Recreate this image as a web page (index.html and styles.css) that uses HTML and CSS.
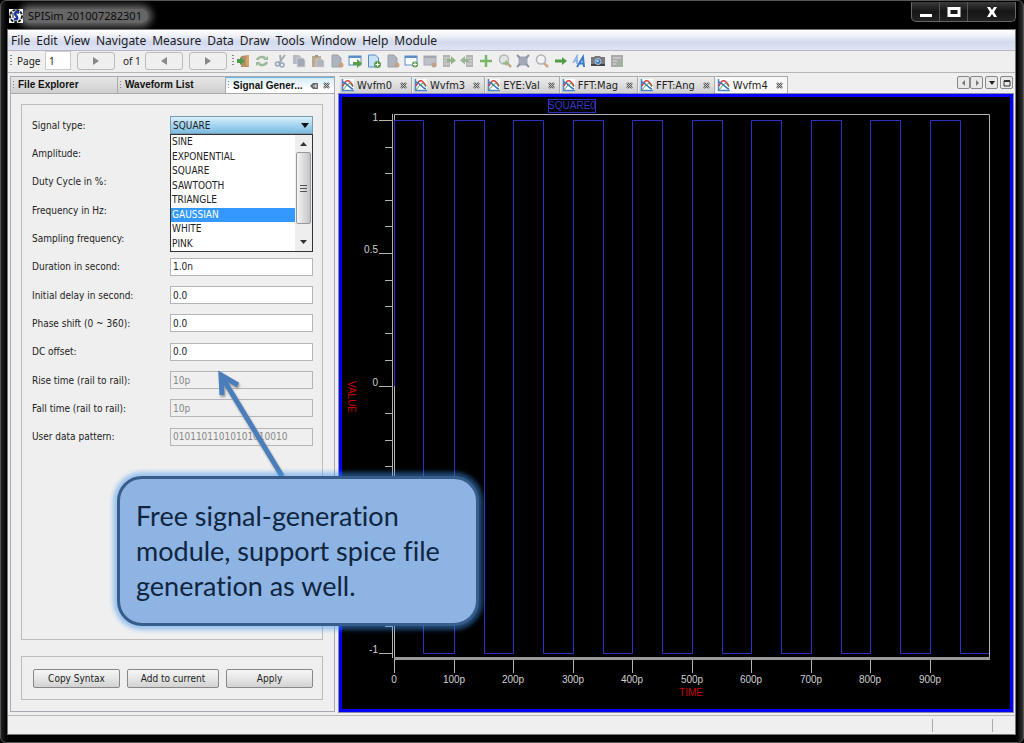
FILE: index.html
```html
<!DOCTYPE html>
<html lang="en">
<head>
<meta charset="utf-8">
<title>SPISim 201007282301</title>
<link rel="stylesheet" href="styles.css">
</head>
<body>
<svg class="defs" aria-hidden="true">
  <symbol id="wave" viewBox="0 0 13 13"><rect x="1" y="0" width="12" height="12" fill="#fff"/><path d="M1.500 0v11.500H13" stroke="#4b86c8" stroke-width="1.500" fill="none"/><path d="M2 7C5 0 8 0 12 7" stroke="#d94141" stroke-width="1.700" fill="none"/><path d="M2 3c4 1 6 6 10 7" stroke="#3b78c4" stroke-width="1.700" fill="none"/><path d="M2 11 6 6l3-2 3 4" stroke="#4f9f58" stroke-width="1" fill="none"/></symbol>
  <symbol id="close" viewBox="0 0 7 7"><path d="M1 1l5 5M6 1 1 6" stroke="#555" stroke-width="2.400"/><path d="M1 1l5 5M6 1 1 6" stroke="#eee" stroke-width=".7"/></symbol>
  <symbol id="doc" viewBox="0 0 14 14"><path d="M2 1h6l3 3v9H2z" fill="#aeb4be" stroke="#9ba1ab"/></symbol>
</svg>
<div class="window">
  <header class="titlebar">
    <svg class="app-icon" viewBox="0 0 14 14"><rect width="14" height="14" fill="#fff"/><circle cx="7" cy="7" r="6" fill="none" stroke="#222" stroke-width="2" stroke-dasharray="3 1"/><path d="M10 4C7 2 5 4 7 6.500S9 11 5 10" stroke="#1837a4" stroke-width="2.500" fill="none"/><path d="M4 4v5" stroke="#111"/></svg>
    <h1>SPISim 201007282301</h1>
    <div class="win-buttons">
      <button aria-label="Minimize"><svg viewBox="0 0 14 12"><path d="M1 9.500h12" stroke="#fff" stroke-width="3"/></svg></button>
      <button aria-label="Maximize"><svg viewBox="0 0 14 12"><rect x="2" y="2.500" width="10" height="7" fill="none" stroke="#fff" stroke-width="3"/></svg></button>
      <button aria-label="Close" class="wide"><svg viewBox="0 0 14 12"><path d="M2 1h3l2 3 2-3h3L9 6l3 5H9L7 8l-2 3H2l3-5z" fill="#fff"/></svg></button>
    </div>
  </header>
  <div class="client">
    <nav class="menu">
      <a href="#">File</a><a href="#">Edit</a><a href="#">View</a><a href="#">Navigate</a><a href="#">Measure</a><a href="#">Data</a><a href="#">Draw</a><a href="#">Tools</a><a href="#">Window</a><a href="#">Help</a><a href="#">Module</a>
    </nav>
    <div class="toolbar">
      <i class="grip"></i>
      <label for="page">Page</label><input id="page" value="1">
      <button class="pager" aria-label="Go"><svg viewBox="0 0 6 8"><path d="M0 0l6 4-6 4z"/></svg></button>
      <span class="of">of 1</span>
      <button class="pager" aria-label="Previous"><svg viewBox="0 0 6 8"><path d="M6 0 0 4l6 4z"/></svg></button>
      <button class="pager" aria-label="Next"><svg viewBox="0 0 6 8"><path d="M0 0l6 4-6 4z"/></svg></button>
      <i class="grip"></i>
      <div class="tools">
        <button aria-label="Exit"><svg viewBox="0 0 14 14"><path d="M5 2l8-1v12H5z" fill="#b58f68"/><path d="M10 3l3-2v12l-3-2z" fill="#d9a46a"/><path d="M1 5h3V3l5 4-5 4V9H1z" fill="#4e9a4a"/></svg></button>
        <button aria-label="Refresh"><svg viewBox="0 0 14 14"><path d="M2 6c1-3 6-4 8-2M12 8c-1 3-6 4-8 2" stroke="#9ab89a" stroke-width="2.500" fill="none"/><path d="M8 6h5V2zM6 8H1v4z" fill="#9ab89a"/></svg></button>
        <button aria-label="Cut"><svg viewBox="0 0 14 14"><path d="M5 9 11 1M7 8 6 1" stroke="#a5a9b0" stroke-width="2"/><circle cx="3.500" cy="10" r="2" fill="none" stroke="#94a5bd" stroke-width="1.500"/><circle cx="8" cy="11" r="2" fill="none" stroke="#94a5bd" stroke-width="1.500"/></svg></button>
        <button aria-label="Copy"><svg viewBox="0 0 14 14"><path d="M1 1h6l2 2v7H1z" fill="#b5bac3"/><path d="M5 4h6l2 2v7H5z" fill="#a3a9b4" stroke="#d6dade" stroke-width=".7"/></svg></button>
        <button aria-label="Paste"><svg viewBox="0 0 14 14"><path d="M1 2h9v11H1z" fill="#bda98f"/><path d="M4 1h3v2H4z" fill="#999"/><path d="M5 5h6l2 2v6H5z" fill="#b1b4ba" stroke="#d6d6d6" stroke-width=".7"/></svg></button>
        <button aria-label="Remove file"><svg viewBox="0 0 14 14"><use href="#doc"/><circle cx="11" cy="11" r="2.500" fill="#c5a184"/></svg></button>
        <button aria-label="Export window"><svg viewBox="0 0 14 14"><rect x="1" y="2" width="12" height="9" fill="#f7faff" stroke="#5c8ec4"/><path d="M1 3h12" stroke="#5c8ec4" stroke-width="2"/><path d="M5 8h4V5l5 4.500L9 14v-3H5z" fill="#5a9f42"/></svg></button>
        <button aria-label="New file"><svg viewBox="0 0 14 14"><path d="M1.500 1h7l3 3v9h-10z" fill="#c8e0f8" stroke="#548bc4"/><circle cx="10.500" cy="10.500" r="3.500" fill="#5d9e4c"/><path d="M8.500 10.500h4m-2-2v4" stroke="#fff"/></svg></button>
        <button aria-label="Delete file"><svg viewBox="0 0 14 14"><use href="#doc"/><circle cx="11" cy="11" r="2.500" fill="#c5a184"/></svg></button>
        <button aria-label="New window"><svg viewBox="0 0 14 14"><rect x="1" y="2" width="12" height="9" fill="#f7faff" stroke="#5c8ec4"/><path d="M1 3h12" stroke="#5c8ec4" stroke-width="2"/><circle cx="11" cy="10.500" r="3" fill="#5d9e4c"/><path d="M9 10.500h4m-2-2v4" stroke="#fff"/></svg></button>
        <button aria-label="Close window"><svg viewBox="0 0 14 14"><rect x="1" y="2" width="12" height="9" fill="#bec1c7" stroke="#a6abb3"/><path d="M1 3h12" stroke="#a0a5ae" stroke-width="2"/><circle cx="11" cy="11" r="2.500" fill="#c5a184"/></svg></button>
        <button aria-label="Import data"><svg viewBox="0 0 14 14"><path d="M1 1h7v12H1z" fill="#b4b4b4"/><path d="M2 4h5M2 7h5M2 10h5" stroke="#d8d8d8"/><path d="M5 5h4V2l5 4.500-5 4V8H5z" fill="#93b48b"/></svg></button>
        <button aria-label="Export data"><svg viewBox="0 0 14 14"><path d="M6 1h7v12H6z" fill="#b4b4b4"/><path d="M7 4h5M7 7h5M7 10h5" stroke="#d8d8d8"/><path d="M9 5H5V2L0 6.500l5 4V8h4z" fill="#9cb497"/></svg></button>
        <button aria-label="Crosshair"><svg viewBox="0 0 14 14"><path d="M7 1v12M1 7h12" stroke="#7bb56c" stroke-width="2.500"/></svg></button>
        <button aria-label="Zoom in"><svg viewBox="0 0 14 14"><path d="M9 9l4 4" stroke="#c9a986" stroke-width="2.500"/><circle cx="6" cy="5.500" r="4.500" fill="#e4e4e4" stroke="#b4b8bc" stroke-width="1.500"/><path d="M5 9h6M8 6.500v5" stroke="#8fb783" stroke-width="1.500"/></svg></button>
        <button aria-label="Zoom fit"><svg viewBox="0 0 14 14"><rect x="2.500" y="2.500" width="9" height="9" fill="#a2a8b5"/><path d="M1 1l3 3M13 1l-3 3M1 13l3-3M13 13l-3-3" stroke="#8d95a5" stroke-width="2"/></svg></button>
        <button aria-label="Zoom"><svg viewBox="0 0 14 14"><path d="M9 9l4 4" stroke="#d0aa85" stroke-width="2.500"/><circle cx="6" cy="5.500" r="4.500" fill="#f2f2f2" stroke="#b0b3b8" stroke-width="1.500"/></svg></button>
        <button aria-label="Forward"><svg viewBox="0 0 14 14"><path d="M1 5.500h7V3l5 4-5 4V8.500H1z" fill="#4f9d42"/></svg></button>
        <button aria-label="Font"><svg viewBox="0 0 14 14"><path d="M1 9 5 2v8M2 7h4" stroke="#82b1e4" stroke-width="1.500" fill="none"/><path d="M5 13 11 3l1 10M7 9.500h5" stroke="#3b7cc8" stroke-width="2" fill="none"/></svg></button>
        <button aria-label="Snapshot"><svg viewBox="0 0 14 14"><path d="M0 3h3l1-1h5l1 1h4v9H0z" fill="#77797c"/><path d="M0 10h14v2H0z" fill="#444"/><circle cx="7" cy="7.500" r="3" fill="#3f78bc" stroke="#b8c4d4"/><circle cx="6.500" cy="7" r="1.300" fill="#a8d2fb"/></svg></button>
        <button aria-label="Report"><svg viewBox="0 0 14 14"><rect x="1" y="1" width="12" height="12" fill="#aaa"/><path d="M3 4h8M3 7h4M3 10h3" stroke="#ddd"/><circle cx="10" cy="10" r="3" fill="#a0b69a"/></svg></button>
      </div>
    </div>
    <main class="work">
      <section class="side">
        <div class="side-tabs">
          <button><i class="grip"></i>File Explorer</button>
          <button><i class="grip"></i>Waveform List</button>
          <button class="active"><i class="grip"></i><span>Signal Gener...</span><svg class="pin" viewBox="0 0 9 8"><path d="M0 4l3-3h5v6H3z" fill="#666"/><path d="M3 4h3M6 2v4" stroke="#eee"/></svg><svg class="x"><use href="#close"/></svg></button>
        </div>
        <div class="side-body">
          <form class="group fields">
            <div class="grid">
              <label for="type">Signal type:</label>
              <div class="combo">
                <select id="type"><option>SQUARE</option></select>
                <div class="popup">
                  <ul role="listbox" aria-label="Signal type">
                    <li role="option">SINE</li><li role="option">EXPONENTIAL</li><li role="option">SQUARE</li><li role="option">SAWTOOTH</li><li role="option">TRIANGLE</li><li role="option" class="hit" aria-selected="true">GAUSSIAN</li><li role="option">WHITE</li><li role="option">PINK</li>
                  </ul>
                  <div class="scroll">
                    <svg viewBox="0 0 7 4"><path d="M0 4l3.500-4L7 4z"/></svg>
                    <div class="thumb"><i></i><i></i><i></i></div>
                    <svg class="down" viewBox="0 0 7 4"><path d="M0 0l3.500 4L7 0z"/></svg>
                  </div>
                </div>
              </div>
              <label for="amp">Amplitude:</label><input id="amp">
              <label for="duty">Duty Cycle in %:</label><input id="duty">
              <label for="freq">Frequency in Hz:</label><input id="freq">
              <label for="samp">Sampling frequency:</label><input id="samp">
              <label for="dur">Duration in second:</label><input id="dur" value="1.0n">
              <label for="delay">Initial delay in second:</label><input id="delay" value="0.0">
              <label for="phase">Phase shift (0 ~ 360):</label><input id="phase" value="0.0">
              <label for="dc">DC offset:</label><input id="dc" value="0.0">
              <label for="rise">Rise time (rail to rail):</label><input id="rise" value="10p" disabled>
              <label for="fall">Fall time (rail to rail):</label><input id="fall" value="10p" disabled>
              <label for="pat">User data pattern:</label><input id="pat" value="01011011010101010010" disabled>
            </div>
          </form>
          <div class="group actions">
            <button>Copy Syntax</button><button>Add to current</button><button>Apply</button>
          </div>
        </div>
      </section>
      <section class="editor">
        <div class="tabs">
          <button><svg class="w"><use href="#wave"/></svg>Wvfm0<svg class="x"><use href="#close"/></svg></button>
          <button><svg class="w"><use href="#wave"/></svg>Wvfm3<svg class="x"><use href="#close"/></svg></button>
          <button><svg class="w"><use href="#wave"/></svg>EYE:Val<svg class="x"><use href="#close"/></svg></button>
          <button><svg class="w"><use href="#wave"/></svg>FFT:Mag<svg class="x"><use href="#close"/></svg></button>
          <button><svg class="w"><use href="#wave"/></svg>FFT:Ang<svg class="x"><use href="#close"/></svg></button>
          <button class="active"><svg class="w"><use href="#wave"/></svg>Wvfm4<svg class="x"><use href="#close"/></svg></button>
          <div class="tab-nav">
            <div class="pair"><button aria-label="Scroll left"><svg viewBox="0 0 8 8"><path d="M5 1 2 4l3 3z" fill="#777"/></svg></button><button aria-label="Scroll right"><svg viewBox="0 0 8 8"><path d="M3 1l3 3-3 3z" fill="#777"/></svg></button></div>
            <button aria-label="List tabs"><svg viewBox="0 0 8 8"><path d="M1 2h6L4 6z" fill="#222"/></svg></button>
            <button aria-label="Maximize editor"><svg viewBox="0 0 8 8"><path d="M1 2h6v5H1z" fill="none" stroke="#333"/><path d="M1 2h6" stroke="#333" stroke-width="2"/></svg></button>
          </div>
        </div>
        <div class="plot">
          <svg viewBox="342 97 668 612" role="img" aria-label="SQUARE0 waveform">
            <g fill="none" stroke="#b4b4b4">
              <path d="M394.500 658V114.500H989.500V658"/>
              <path d="M392.500 114V658"/>
              <path d="M394 658.500H990" stroke="#999" stroke-width="3"/>
              <path d="M379 120.500h13M379 253.500h13M379 386.500h13M379 519.500h13M379 653.500h13"/>
              <path d="M385 147.500h7M385 173.500h7M385 200.500h7M385 226.500h7M385 280.500h7M385 306.500h7M385 333.500h7M385 360.500h7M385 413.500h7M385 440.500h7M385 466.500h7M385 493.500h7M385 546.500h7M385 573.500h7M385 600.500h7M385 626.500h7"/>
              <path d="M394.500 660v13M454.500 660v13M513.500 660v13M573.500 660v13M632.500 660v13M692.500 660v13M751.500 660v13M811.500 660v13M870.500 660v13M930.500 660v13"/>
            </g>
            <path class="trace" d="M394.500 386V120.500H423.500V653.500H454.500V120.500H484.500V653.500H513.500V120.500H543.500V653.500H573.500V120.500H603.500V653.500H632.500V120.500H662.500V653.500H692.500V120.500H722.500V653.500H751.500V120.500H781.500V653.500H811.500V120.500H841.500V653.500H870.500V120.500H900.500V653.500H930.500V120.500H960.500V653.500H989"/>
            <rect class="trace" x="548.500" y="99.500" width="47" height="13"/>
            <text class="legend" x="572" y="109">SQUARE0</text>
            <g class="ylab"><text x="378" y="121">1</text><text x="378" y="253">0.5</text><text x="378" y="386">0</text><text x="378" y="653">-1</text></g>
            <g class="xlab"><text x="394" y="683">0</text><text x="454" y="683">100p</text><text x="513" y="683">200p</text><text x="573" y="683">300p</text><text x="632" y="683">400p</text><text x="692" y="683">500p</text><text x="751" y="683">600p</text><text x="811" y="683">700p</text><text x="870" y="683">800p</text><text x="930" y="683">900p</text></g>
            <text class="axis" x="691" y="696">TIME</text>
            <text class="axis" transform="translate(348 397) rotate(90)">VALUE</text>
          </svg>
        </div>
      </section>
    </main>
    <footer class="status"><i></i><i></i></footer>
  </div>
  <svg class="arrow" viewBox="0 0 80 112"><path d="M71 108 11 9M27 17 10 7l1 20" fill="none" stroke="#4a7ebb" stroke-width="5"/></svg>
  <aside class="callout">Free signal-generation<br>module, support spice file<br>generation as well.</aside>
</div>
</body>
</html>
```
FILE: styles.css
```css
* { box-sizing: border-box; }
body { margin: 0; background: #000; font-family: "DejaVu Sans Condensed", "Noto Sans", sans-serif; font-size: 10px; color: #222; }
button, input, select { font: inherit; color: inherit; margin: 0; padding: 0; border: 0; background: none; }
.defs { position: absolute; width: 0; height: 0; }
.window {
  position: relative; min-height: 100vh; display: flex; flex-direction: column;
  padding: 1px 7px 7px 6px; border: 1px solid #555; border-radius: 6px;
  background: linear-gradient(90deg, #222 0, #000 6px, #000 calc(100% - 6px), #333 100%);
}
.titlebar { display: flex; align-items: center; height: 27px; }
.app-icon { position: relative; z-index: 1; width: 14px; height: 14px; margin: 0 0 0 2px; }
.titlebar h1 {
  margin: 0; padding: 0 6px 0 5px; font: 11px/14px "Noto Sans", sans-serif; color: #0c0c0c;
  background: #666; border-radius: 7px; box-shadow: 0 0 7px 4px #666;
}
.win-buttons { display: flex; align-self: flex-start; height: 20px; margin: 0 0 0 auto; border: 1px solid #666; border-top: 0; border-radius: 0 0 5px 5px; background: linear-gradient(#3a3a3a, #161616 50%, #222); }
.win-buttons button { width: 28px; display: grid; place-items: center; border-right: 1px solid #555; }
.win-buttons button.wide { width: 47px; border: 0; }
.win-buttons svg { width: 14px; height: 12px; }
.client { flex: 1; display: flex; flex-direction: column; border: 1px solid #777; background: #efefef; }
.menu { display: flex; gap: 6px; height: 21px; padding: 0 3px; font: 12px/22px "Noto Sans", sans-serif; background: linear-gradient(#fff, #eef0f8 30%, #d3daee 60%, #dfe4f4); border-bottom: 1px solid #b5b8c0; }
.menu a { color: #1c1c1c; text-decoration: none; }
.toolbar { display: flex; align-items: center; height: 22px; padding: 0 2px 2px; border-bottom: 1px solid #b5b5b5; font: 11px/14px "Noto Sans", sans-serif; }
.grip { flex: none; width: 2px; height: 12px; background: repeating-linear-gradient(#888 0 1px, transparent 1px 3px); }
.toolbar label { width: 33px; padding-left: 5px; font-size: 10px; }
.toolbar input { width: 26px; height: 19px; padding-left: 3px; font-size: 10px; background: #fff; border: 1px solid #ccc; }
.pager { width: 38px; height: 18px; margin-left: 6px; border: 1px solid #bbb; border-radius: 3px; display: grid; place-items: center; background: #efefef; }
.pager svg { width: 6px; height: 8px; fill: #888; }
.of { width: 24px; padding-left: 8px; white-space: nowrap; font-size: 10px; }
.pager + .grip { margin-left: 5px; }
.tools { flex: 0 1 392px; display: grid; grid-template-columns: repeat(21, 1fr); }
.tools button { display: grid; place-items: center; }
.tools svg { width: 14px; height: 14px; }
.work { flex: 1; display: grid; grid-template-columns: 325px 1fr; gap: 4px; padding: 3px 2px 3px; }
.side { display: flex; flex-direction: column; border: 1px solid #a9a9b4; }
.side-tabs { display: grid; grid-template-columns: 107px 108px 1fr; height: 17px; border-bottom: 1px solid #aaa; }
.side-tabs button { display: flex; align-items: center; gap: 4px; padding: 0 4px 0 2px; font: bold 10px/14px "Liberation Sans", sans-serif; color: #111; text-align: left; background: linear-gradient(#e6e6e6, #cfcfcf); border-right: 1px solid #aaa; white-space: nowrap; }
.side-tabs .active { background: linear-gradient(#d5ecf8, #fff 70%); border: 0; border-top: 1px solid #6bb4dc; }
.side-tabs span { flex: 1; }
.side-tabs .grip { height: 9px; width: 1px; }
.pin { width: 9px; height: 8px; }
.x { width: 7px; height: 7px; }
.side-body { flex: 1; display: flex; flex-direction: column; gap: 16px; padding: 10px 11px 11px 10px; }
.group { border: 1px solid #bdbdbd; }
.fields { flex: 1; padding: 6px 9px 0 10px; }
.grid { display: grid; height: 340px; grid-template-columns: 138px 1fr; grid-auto-rows: 1fr; align-items: center; }
.grid input { width: 100%; height: 18px; padding: 0 2px; border: 1px solid #b4b4ba; background: #fff; }
.grid input:disabled { color: #888; background: #efefef; }
.combo { position: relative; }
.combo select { display: block; width: 100%; height: 18px; padding: 0 2px; appearance: none; border: 1px solid #7b9db3; background: linear-gradient(#d9effb, #a5d5f0 50%, #7cbbe0); }
.combo::after { content: ""; position: absolute; right: 4px; top: 7px; border: 4px solid transparent; border-top: 5px solid #111; border-bottom: 0; }
.popup { position: absolute; z-index: 1; top: 18px; left: 0; right: 0; height: 118px; display: flex; background: #fff; border: 1px solid #333; }
.popup ul { flex: 1; margin: 0; padding: 0; list-style: none; display: grid; grid-auto-rows: 1fr; }
.popup li { padding-left: 1px; line-height: 14px; }
.popup .hit { color: #fff; background: #3399ff; }
.scroll { width: 17px; display: flex; flex-direction: column; align-items: center; background: #eee; }
.scroll svg { width: 7px; height: 4px; margin: 7px 0 6px; fill: #333; }
.scroll .down { margin: 16px 0 7px; }
.thumb { flex: 1; width: 15px; display: flex; flex-direction: column; align-items: center; justify-content: center; gap: 2px; border: 1px solid #999; border-radius: 2px; background: linear-gradient(90deg, #f4f4f4, #c4c4c8); }
.thumb i { width: 7px; height: 1px; background: #555; }
.actions { display: grid; grid-template-columns: 87px 92px 87px; gap: 7px; height: 44px; padding: 12px 9px 11px 11px; }
.actions button { border: 1px solid #888; border-radius: 2px; background: linear-gradient(#f6f6f6, #e6e6e6 50%, #d2d2d2); }
.editor { display: flex; flex-direction: column; min-width: 0; }
.tabs { display: flex; height: 18px; font-size: 11px; }
.tabs > button { display: flex; align-items: center; gap: 3px; padding: 0 4px 0 1px; border: 1px solid #aaa; border-left-color: #eee; border-bottom: 0; background: linear-gradient(#ececec, #cdcdcd); }
.tabs > button .x { margin-left: 5px; }
.tabs > .active { background: #f8f8f8; }
.w { width: 13px; height: 13px; }
.tab-nav { display: flex; gap: 2px; margin-left: auto; align-items: flex-start; }
.tab-nav button { width: 13px; height: 13px; display: grid; place-items: center; border: 1px solid #888; border-radius: 2px; background: #e8e8e8; }
.tab-nav svg { width: 8px; height: 8px; }
.pair { display: flex; }
.plot { flex: 1; border: 3px solid #00f; background: #000; outline: 1px solid #8b8ba8; }
.plot svg { display: block; width: 100%; height: auto; font: 10px "Liberation Sans", sans-serif; fill: #d0d0d0; }
.plot .trace { fill: none; stroke: #3030c4; }
.plot .legend { fill: #3838c8; text-anchor: middle; }
.ylab { text-anchor: end; }
.xlab { text-anchor: middle; }
.plot .axis { fill: #c80000; text-anchor: middle; }
.status { display: flex; justify-content: flex-end; gap: 59px; height: 19px; padding: 3px 22px 2px; border-top: 1px solid #b8b8b8; }
.status i { width: 1px; background: #aaa; }
.arrow { position: absolute; z-index: 2; left: 210px; top: 367px; width: 80px; height: 112px; filter: drop-shadow(1px 2px 1px #999); }
.callout {
  position: absolute; z-index: 3; left: 116px; top: 475px; width: 362px; height: 150px; padding: 19px 0 0 16px;
  border: 3px solid #385d8a; border-radius: 25px; background: #8eb4e3;
  box-shadow: 0 0 4px 4px rgba(62, 148, 238, .48); color: #10253f; font: 27px/35px Lato, "Open Sans", sans-serif; font-variant-ligatures: none; white-space: nowrap;
}
```
